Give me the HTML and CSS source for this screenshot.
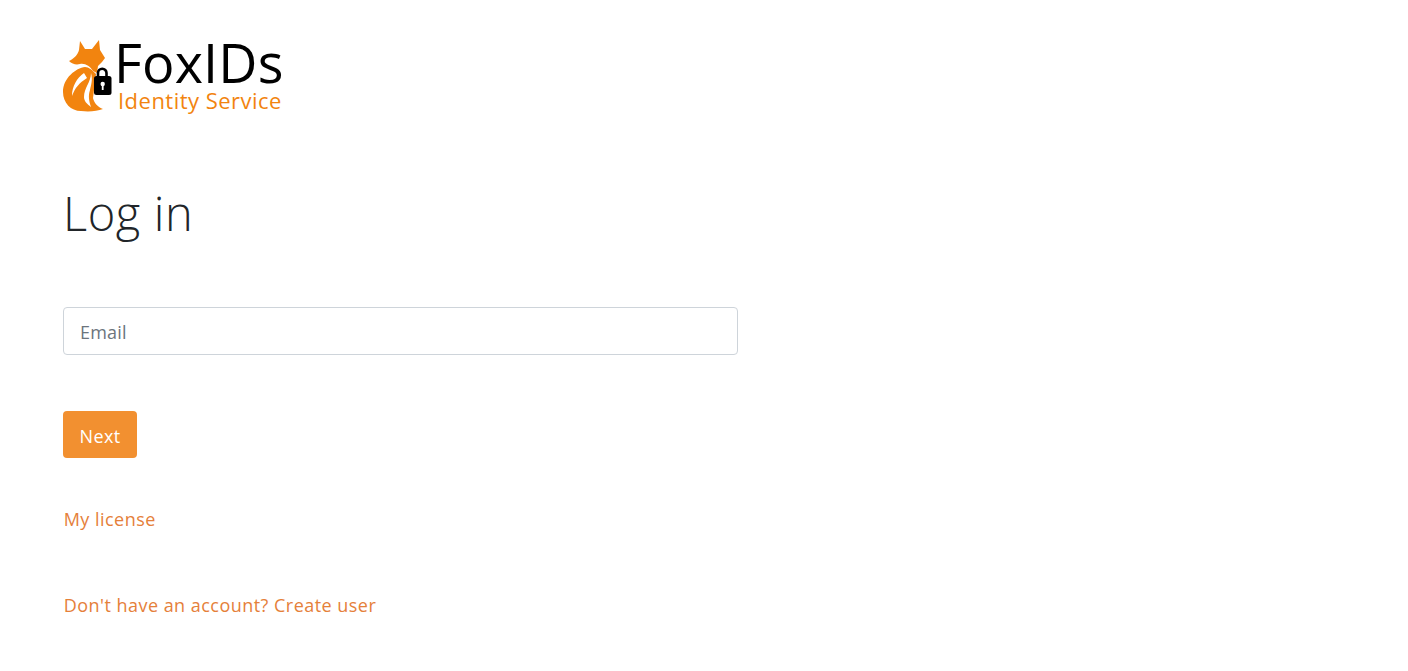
FILE: index.html
```html
<!DOCTYPE html>
<html lang="en">
<head>
<meta charset="utf-8">
<title>Log in</title>
<link rel="stylesheet" href="styles.css">
</head>
<body>
<main class="page">
  <header class="logo">
    <svg class="logo-icon" viewBox="63 40 50 72" width="50" height="72" aria-hidden="true">
      <path class="fox" d="M80 41 L85 49 L92 49 L99 40 L100 50 L105 58 L102 62 L98 66 L97 73 L93 71 C90 66 85 63 80 64 C76 65 72 64 69 61 C73 59 78 55 79 50 Z"/>
      <path class="fox" d="M85 67 C76 68 63 78 63 92 C63 103 71 111 81 111 C90 112 97 111 103 109 C98 107 94 103 93 98 L96 74 C92 70 89 67 85 67 Z"/>
      <path class="cut" d="M84 73 C77 78 72 86 72 96 C75 88 79 83 87 78 Z"/>
      <path class="cut" d="M91 73 C91 82 84 88 84 97 C84 101 87 104 91 107 C89 101 88 96 90 90 C91 85 93 80 91 73 Z"/>
      <path class="shackle" d="M98 77 V73 A4.2 4.2 0 0 1 106.5 73 V77"/>
      <rect class="body" x="94" y="76" width="17.5" height="19" rx="2.5"/>
      <circle class="hole" cx="102.7" cy="84" r="2.2"/>
      <rect class="hole" x="101.8" y="84" width="1.8" height="6"/>
    </svg>
    <div class="logo-text">
      <div class="logo-name">FoxIDs</div>
      <div class="logo-sub">Identity Service</div>
    </div>
  </header>
  <h1 class="title">Log in</h1>
  <form class="form">
    <input class="input" type="email" placeholder="Email">
    <button class="btn" type="button">Next</button>
  </form>
  <p class="row first"><a class="link" href="#">My license</a></p>
  <p class="row second"><a class="link" href="#">Don't have an account? Create user</a></p>
</main>
</body>
</html>
```
FILE: styles.css
```css
* { box-sizing: border-box; }
html, body { margin: 0; padding: 0; background: #fff; }
body { font-family: "Open Sans", "Noto Sans", sans-serif; color: #212529; height: 671px; overflow: hidden; }
.page { padding: 40px 0 0 63px; width: 738px; }
.logo { display: flex; align-items: flex-start; height: 75px; }
.logo-icon { display: block; flex: none; margin-right: 2px; }
.fox { fill: #f2840f; }
.cut { fill: #fff; }
.shackle { fill: none; stroke: #000; stroke-width: 2.6; }
.body { fill: #000; }
.hole { fill: #fff; }
.logo-text { width: 170px; margin-top: -3px; margin-left: -1px; }
.logo-name { font-size: 54px; line-height: 51px; color: #000; letter-spacing: .15px; white-space: nowrap; }
.logo-sub { font-size: 22px; line-height: 24px; color: #f2840f; margin-left: 4px; white-space: nowrap; letter-spacing: 0.48px; }
.title { font-weight: 300; font-size: 47px; line-height: 56px; margin: 70px 0 0; letter-spacing: 0.6px; }
.form { margin-top: 66px; display: flex; flex-direction: column; align-items: flex-start; }
.input { width: 675px; height: 48px; border: 1px solid #ced4da; border-radius: 4px; padding: 2px 16px 0; font: inherit; font-size: 18px; letter-spacing: .2px; color: #495057; outline: none; }
.input::placeholder { color: #6c757d; opacity: 1; }
.btn { margin-top: 56px; width: 74px; height: 47px; background: #f29030; border: 0; border-radius: 4px; color: #fff; font: inherit; font-size: 18px; letter-spacing: .4px; padding: 2px 0 0; }
.row { margin: 0; padding-left: 0.7px; font-size: 18px; line-height: 27px; letter-spacing: .47px; }
.first { margin-top: 48px; }
.second { margin-top: 59px; }
.link { color: #e5803a; text-decoration: none; }
```
